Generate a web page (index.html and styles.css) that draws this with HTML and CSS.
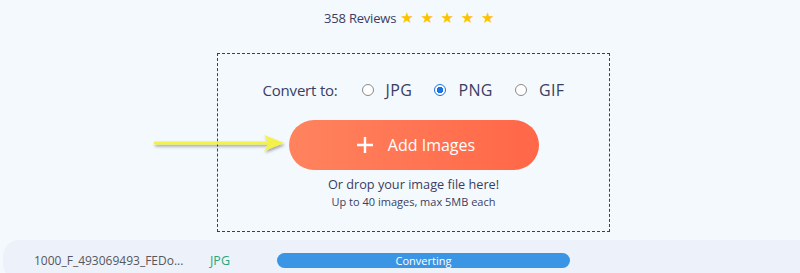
FILE: index.html
```html
<!DOCTYPE html>
<html lang="en">
  <head>
    <meta charset="UTF-8" />
    <title>Image Converter</title>
    <link rel="stylesheet" href="styles.css">
  </head>
  <body>
    <div class="page">
      <div class="reviews">
        <span class="count">358 Reviews</span>
        <span class="stars">★ ★ ★ ★ ★</span>
      </div>

      <div class="dropzone">
        <div class="formats">
          <span class="label">Convert to:</span>
          <span class="option"><span class="radio"></span>JPG</span>
          <span class="option"><span class="radio checked"></span>PNG</span>
          <span class="option"><span class="radio"></span>GIF</span>
        </div>
        <button class="add-btn">
          <svg width="18" height="18" viewBox="0 0 18 18">
            <path d="M9 1v16M1 9h16" stroke="#fff" stroke-width="2.4" fill="none" />
          </svg>
          <span>Add Images</span>
        </button>
        <p class="drop-text">Or drop your image file here!</p>
        <p class="limit-text">Up to 40 images, max 5MB each</p>
      </div>

      <!-- panah penunjuk -->
      <svg class="arrow" width="140" height="24" viewBox="0 0 140 24">
        <defs>
          <filter id="shadow" x="-10%" y="-50%" width="120%" height="200%">
            <feDropShadow dx="1" dy="2" stdDeviation="1.5" flood-color="#000" flood-opacity="0.35" />
          </filter>
        </defs>
        <g filter="url(#shadow)">
          <path d="M2 12h116" stroke="#f4f24a" stroke-width="3" />
          <path d="M112 4l20 8-20 8 5-8z" fill="#f4f24a" />
        </g>
      </svg>
    </div>

    <div class="file-row">
      <span class="file-name">1000_F_493069493_FEDo...</span>
      <span class="file-type">JPG</span>
      <div class="progress">Converting</div>
    </div>
  </body>
</html>
```

FILE: styles.css
```css
* {
  box-sizing: border-box;
  margin: 0;
  padding: 0;
}
body {
  font-family: "Open Sans", "Noto Sans", Arial, sans-serif;
  background-color: #f3f9fd;
  color: #3b3d62;
  height: 273px;
  overflow: hidden;
}

.page {
  position: relative;
  padding-left: 217px;
}

/* Ulasan */
.reviews {
  width: 393px;
  height: 36px;
  padding-right: 8px;
  display: flex;
  justify-content: center;
  align-items: center;
  gap: 4px;
  font-size: 13px;
  letter-spacing: -0.2px;
}
.stars {
  color: #ffc200;
  font-family: "DejaVu Sans", sans-serif;
  font-size: 15px;
  letter-spacing: 0.5px;
  word-spacing: 1px;
}

/* Area drop */
.dropzone {
  width: 393px;
  height: 179px;
  margin-top: 17px;
  border: 1px dashed #3b3f5e;
  display: flex;
  flex-direction: column;
  align-items: center;
  padding-top: 24px;
}
.formats {
  display: flex;
  align-items: center;
  font-size: 15px;
  height: 24px;
  letter-spacing: -0.2px;
}
.label {
  margin-right: 24px;
}
.option {
  display: flex;
  align-items: center;
  margin-right: 22px;
  font-size: 16px;
  letter-spacing: 0.4px;
}
.option:last-child {
  margin-right: 0;
}
.radio {
  width: 12px;
  height: 12px;
  border: 1px solid #8a8a8a;
  border-radius: 50%;
  margin-right: 12px;
  background: #fff;
}
.radio.checked {
  border-color: #1a73e8;
  background: radial-gradient(circle, #1a73e8 0 3px, #fff 3.5px);
}

.add-btn {
  margin-top: 18px;
  width: 250px;
  height: 50px;
  border: none;
  border-radius: 25px;
  background: linear-gradient(90deg, #ff835e, #ff6748);
  color: #fff;
  font-family: inherit;
  font-size: 16px;
  display: flex;
  justify-content: center;
  align-items: center;
  gap: 14px;
  padding-left: 4px;
}
.drop-text {
  margin-top: 5px;
  font-size: 12.7px;
  line-height: 18px;
}
.limit-text {
  font-size: 11px;
  line-height: 18px;
}

.arrow {
  position: absolute;
  left: 152px;
  top: 131px;
}

/* Baris file */
.file-row {
  margin-top: 8px;
  margin-left: 3px;
  height: 40px;
  background-color: #edf1f9;
  border-radius: 16px 0 0 16px;
  display: flex;
  align-items: center;
  font-size: 12px;
}
.file-name {
  margin-left: 31px;
  width: 176px;
  color: #555760;
}
.file-type {
  color: #27a87a;
  font-size: 12.5px;
  width: 67px;
}
.progress {
  width: 293px;
  height: 15px;
  border-radius: 8px;
  background-color: #3a95e4;
  color: #fff;
  font-size: 11px;
  line-height: 15px;
  text-align: center;
}
```
